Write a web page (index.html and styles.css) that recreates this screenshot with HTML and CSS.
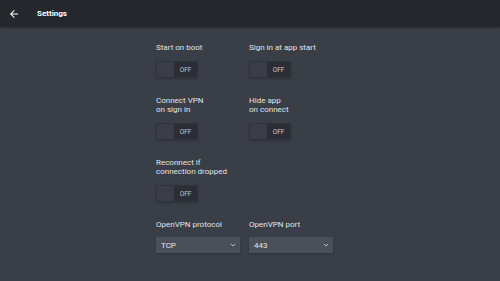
FILE: index.html
```html
<!DOCTYPE html>
<html lang="en">

<head>
    <meta charset="UTF-8">
    <meta name="viewport" content="width=device-width, initial-scale=1.0">
    <title>Settings</title>
    <link rel="stylesheet" href="styles.css">
</head>

<body>
    <div id="topbar">
        <span id="back">
            <svg width="12" height="12" viewBox="0 0 24 24">
                <path d="M20 11H7.83l5.59-5.59L12 4l-8 8 8 8 1.41-1.41L7.83 13H20v-2z" fill="#ffffff" />
            </svg>
        </span>
        <span class="title">Settings</span>
    </div>

    <div id="main">
        <div class="grid">
            <div class="item">
                <span class="label">Start on boot</span>
                <div class="toggle"><div class="knob"></div><span>OFF</span></div>
            </div>
            <div class="item">
                <span class="label">Sign in at app start</span>
                <div class="toggle"><div class="knob"></div><span>OFF</span></div>
            </div>
            <div class="item">
                <span class="label">Connect VPN<br>on sign in</span>
                <div class="toggle"><div class="knob"></div><span>OFF</span></div>
            </div>
            <div class="item">
                <span class="label">Hide app<br>on connect</span>
                <div class="toggle"><div class="knob"></div><span>OFF</span></div>
            </div>
            <div class="item">
                <span class="label">Reconnect if<br>connection dropped</span>
                <div class="toggle"><div class="knob"></div><span>OFF</span></div>
            </div>
            <div class="item"></div>
            <div class="item">
                <span class="label">OpenVPN protocol</span>
                <div class="select">
                    <span>TCP</span>
                    <svg width="6" height="4" viewBox="0 0 6 4"><path d="M0.8 0.8L3 3L5.2 0.8" stroke="#b4b7bc" stroke-width="1" fill="none" /></svg>
                </div>
            </div>
            <div class="item">
                <span class="label">OpenVPN port</span>
                <div class="select">
                    <span>443</span>
                    <svg width="6" height="4" viewBox="0 0 6 4"><path d="M0.8 0.8L3 3L5.2 0.8" stroke="#b4b7bc" stroke-width="1" fill="none" /></svg>
                </div>
            </div>
        </div>
    </div>
</body>

</html>
```

FILE: styles.css
```css
body {
    margin: 0;
    font-family: Roboto, "Liberation Sans", sans-serif;
    background-color: #3a3e46;
    color: #e2e3e5;
    height: 281px;
    overflow: hidden;
}

#topbar {
    height: 27px;
    background-color: #25272d;
    display: flex;
    align-items: center;
    padding-left: 8px;
    gap: 17px;
    box-shadow: 0 1px 2px rgba(0, 0, 0, 0.3);
}

#back {
    display: flex;
}

.title {
    font-size: 8px;
    font-weight: bold;
    color: #ffffff;
}

#main {
    padding-top: 16px;
}

.grid {
    width: 188px;
    margin: 0 auto;
    display: grid;
    grid-template-columns: 84px 84px;
    column-gap: 9px;
    row-gap: 18px;
}

.item {
    display: flex;
    flex-direction: column;
    justify-content: flex-end;
    align-items: flex-start;
}

.label {
    font-size: 8px;
    line-height: 9px;
    margin-bottom: 9px;
}

.toggle {
    width: 42px;
    height: 17px;
    box-sizing: border-box;
    display: flex;
    align-items: center;
    background-color: #2b2e34;
    border: 1px solid #30333a;
    box-shadow: 0 1px 2px rgba(0, 0, 0, 0.2);
}

.knob {
    width: 17px;
    height: 15px;
    background-color: #3a3d45;
}

.toggle span {
    flex: 1;
    text-align: center;
    font-size: 6.5px;
    color: #c5c7cb;
}

.select {
    width: 84px;
    height: 16px;
    box-sizing: border-box;
    padding: 0 4px 0 5px;
    display: flex;
    align-items: center;
    justify-content: space-between;
    background-color: #4a4f58;
    font-size: 8px;
    color: #e6e7e9;
    margin-top: -1px;
    box-shadow: 0 1px 2px rgba(0, 0, 0, 0.2);
}
```
